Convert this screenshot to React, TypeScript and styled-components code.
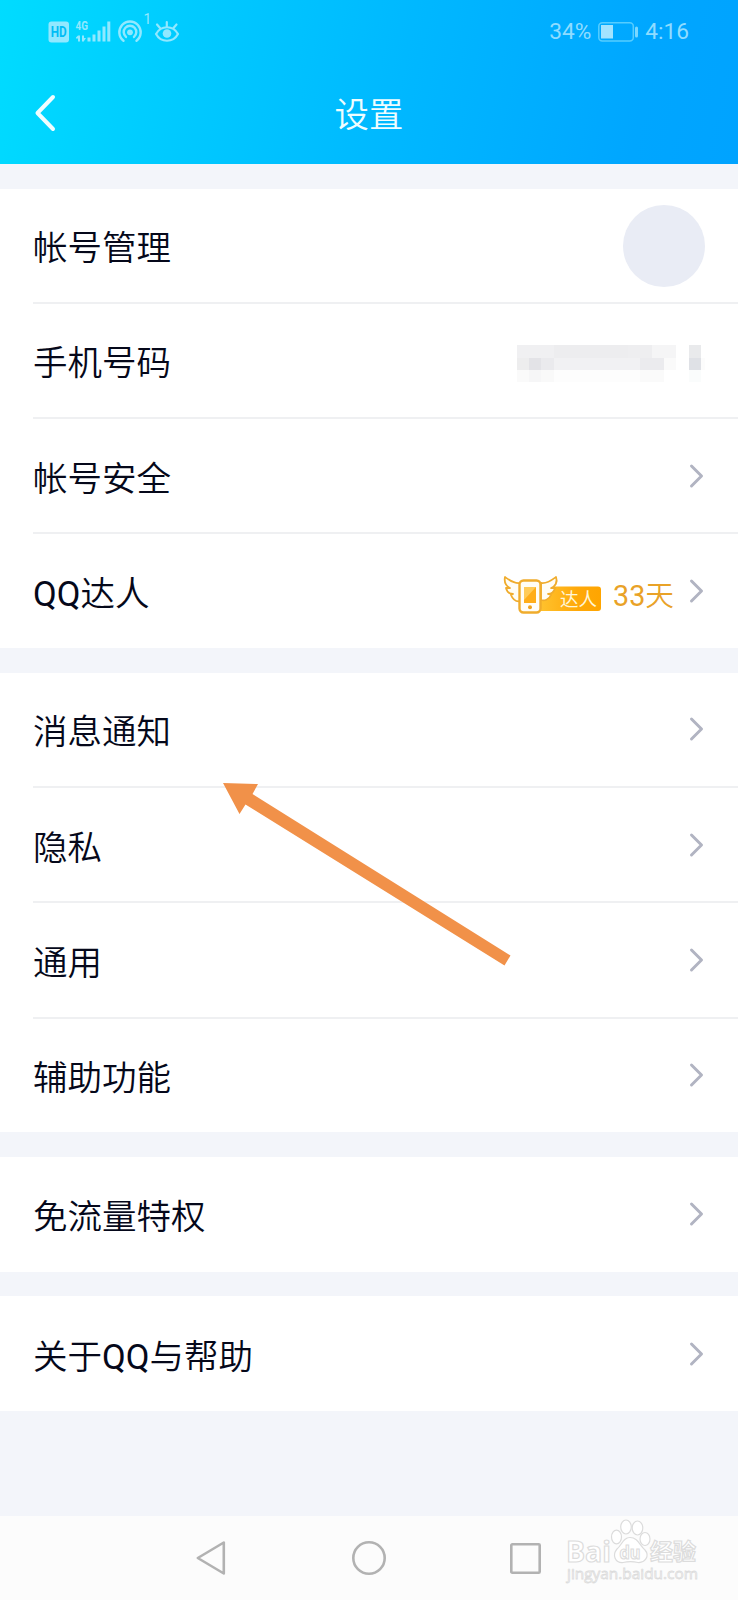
import React from 'react';
import styled, { createGlobalStyle } from 'styled-components';

const GlobalStyle = createGlobalStyle`
  * { box-sizing: border-box; }
  body {
    margin: 0;
    background: #f3f5fa;
    font-family: Roboto, 'Noto Sans CJK SC', sans-serif;
    color: #05081a;
  }
  svg { display: block; flex: none; }
`;

const Screen = styled.div`
  position: relative;
  display: flex;
  flex-direction: column;
  width: 738px;
  height: 1600px;
  overflow: hidden;
  background: #f3f5fa;
`;

const Header = styled.header`
  flex: none;
  height: 164px;
  background: linear-gradient(102deg, #00dcff 0%, #00caff 26%, #00b8ff 54%, #00a6ff 86%, #00a3ff 100%);
  color: #effdff;
`;

const StatusBar = styled.div`
  display: flex;
  justify-content: space-between;
  align-items: center;
  height: 63px;
  padding: 0 49px 0 48px;
  color: #91e8ff;
`;

const StatusGroup = styled.div<{ $gap: number }>`
  display: flex;
  align-items: center;
  gap: ${(p) => p.$gap}px;
`;

const StatusText = styled.span`
  font-size: 22.7px;
  line-height: 30px;
  color: #8fdcff;
`;

const TitleBar = styled.div`
  display: grid;
  grid-template-columns: 100px 1fr 100px;
  align-items: center;
  height: 101px;
`;

const BackButton = styled.button`
  justify-self: start;
  margin: 0 0 2px 34px;
  padding: 0;
  border: 0;
  background: none;
  color: inherit;
`;

const Title = styled.h1`
  margin: 3px 0 0;
  text-align: center;
  font-size: 34.4px;
  line-height: 50px;
  font-weight: 350;
`;

const List = styled.main`
  display: flex;
  flex-direction: column;
  flex: 1;
  gap: 24.5px;
  padding-top: 24.5px;
`;

const Group = styled.section`
  background: #fff;
  padding-left: 33px;
`;

const Row = styled.div`
  display: flex;
  align-items: center;
  justify-content: space-between;
  height: 114.9px;
  padding-right: 33px;
  &:not(:last-child) {
    height: 115.3px;
    border-bottom: 2px solid #eff0f2;
  }
  &:last-child:not(:first-child) { height: 113.8px; }
`;

const Label = styled.span`
  padding-top: 6px;
  font-size: 34.5px;
  line-height: 50px;
  font-weight: 350;
`;

const Latin = styled.span`
  font-weight: 400;
`;

const Value = styled.div`
  display: flex;
  align-items: center;
  padding-right: 1px;
`;

const Avatar = styled.div`
  width: 82px;
  height: 82px;
  margin-top: 2px;
  border-radius: 50%;
  background: #e9ecf5;
`;

const Mosaic = styled.svg`
  margin-top: 8px;
`;

const Badge = styled.svg`
  margin-top: 8px;
`;

const Days = styled.span`
  margin: 9px 15px 0 12px;
  font-size: 28.7px;
  line-height: 40px;
  font-weight: 350;
  color: #e9a227;
`;

const NavBar = styled.nav`
  display: flex;
  align-items: center;
  flex: none;
  height: 84px;
  padding-left: 196px;
  background: #fcfcfc;
`;

const NavItem = styled.div<{ $width: number }>`
  width: ${(p) => p.$width}px;
`;

const Overlay = styled.svg`
  position: absolute;
  left: 218px;
  top: 778px;
`;

const Watermark = styled.svg`
  position: absolute;
  left: 560px;
  top: 1514px;
`;

const Chevron = () => (
  <svg width="15" height="26" viewBox="0 0 15 26" fill="none" stroke="#b1b4c2" strokeWidth="3" strokeLinecap="round" strokeLinejoin="round">
    <path d="M2.5 3 12.5 13 2.5 23" />
  </svg>
);

const SignalIcons = () => (
  <svg width="134" height="34" viewBox="48 14.5 134 34" fill="currentColor" overflow="visible">
    <rect x="48.500" y="21" width="20.500" height="21" rx="3" />
    <text x="58.700" y="36.500" fontSize="14" fontWeight="700" textAnchor="middle" fill="#00bdf5" textLength="16" lengthAdjust="spacingAndGlyphs">HD</text>
    <text x="75.500" y="29.500" fontSize="12" fontWeight="700" textLength="12.500" lengthAdjust="spacingAndGlyphs">4G</text>
    <path d="M78 35h2v6h-2zM76 37l2-2v3h-2zM82 35h2v6h-2zM84 37.500h2l-2 3z" />
    <path d="M87.500 37h3v4h-3zM92.500 34h3v7h-3zM97.500 30h3v11h-3zM102.500 26h3v15h-3zM107.300 21h3v20h-3z" />
    <g fill="none" stroke="currentColor" strokeWidth="2.400" strokeLinecap="round">
      <path d="M123.500 40.200A10.700 10.700 0 1 1 136.500 40.200" />
      <path d="M126 36.400A6.300 6.300 0 1 1 134 36.400" />
    </g>
    <circle cx="130" cy="31.800" r="2.900" />
    <text x="143.500" y="23" fontSize="14">1</text>
    <g fill="none" stroke="currentColor" strokeWidth="2.200" strokeLinecap="round">
      <path d="M156 33.500C161 24.500 173 24.500 178 33.500C173 42.500 161 42.500 156 33.500Z" strokeLinejoin="round" />
      <path d="M157 24l3 3.500M166.800 21.500v4.500M176.500 24l-3 3.500" />
    </g>
    <circle cx="167" cy="33" r="4.300" />
  </svg>
);

const BatteryIcon = () => (
  <svg width="41" height="20" viewBox="0 0 41 20">
    <rect x=".800" y=".800" width="34.500" height="18.200" rx="3.500" fill="none" stroke="#56cdff" strokeWidth="1.500" />
    <rect x="3" y="3" width="12" height="13.500" fill="#a2e3ff" />
    <rect x="37" y="4.500" width="3" height="11" rx="1.500" fill="#7ad7ff" />
  </svg>
);

const MOSAIC: [number, number, number, number, string][] = [
  [0, 0, 37, 13, '#f0f0f2'],
  [37, 0, 74, 13, '#ededef'],
  [111, 0, 24, 13, '#eeeef0'],
  [135, 0, 24, 13, '#f5f5f6'],
  [0, 13, 12, 12, '#ededee'],
  [12, 13, 12, 12, '#e3e3e7'],
  [24, 13, 13, 12, '#eaeaed'],
  [37, 13, 86, 12, '#f1f1f3'],
  [123, 13, 24, 12, '#ebebee'],
  [147, 13, 12, 12, '#fafafa'],
  [0, 25, 12, 12, '#fafafa'],
  [12, 25, 12, 12, '#f6f6f7'],
  [24, 25, 13, 12, '#f9f9f9'],
  [37, 25, 86, 12, '#fdfdfd'],
  [123, 25, 24, 12, '#fafafa'],
  [172, 0, 12, 13, '#e9eaec'],
  [172, 13, 12, 12, '#dfe1e6'],
  [184, 13, 12, 12, '#fcfcfc'],
  [172, 25, 12, 12, '#fafcfc'],
];

const HiddenNumber = () => (
  <Mosaic width="188" height="38" viewBox="0 0 188 38" shapeRendering="crispEdges">
    {MOSAIC.map(([x, y, w, h, fill]) => (
      <rect key={`${x}-${y}`} x={x} y={y} width={w} height={h} fill={fill} />
    ))}
  </Mosaic>
);

const MasterBadge = () => (
  <Badge width="98" height="40" viewBox="503 575 98 40">
    <defs>
      <linearGradient id="badge" x1="0" x2="1">
        <stop offset="0" stopColor="#ffc22e" />
        <stop offset=".6" stopColor="#ffa90a" />
        <stop offset="1" stopColor="#ffa500" />
      </linearGradient>
    </defs>
    <path d="M540 590L555 586.500H598q3 0 3 3V608q0 3-3 3H540Z" fill="url(#badge)" />
    <text x="560" y="606" fontSize="18.500" fill="#fff6d8" textLength="37" lengthAdjust="spacingAndGlyphs">达人</text>
    <g fill="#fffdf6" stroke="#f0ac2c" strokeWidth="1.800" strokeLinejoin="round">
      <path d="M520 583C514 584 509 580 505 577C504 582 506 586 510 588C507 588 506 588 506 588C507 592 510 594 513 594C511 595 511 595 511 595C513 600 517 602 521 601Z" />
      <path d="M541 583C547 584 552 580 556 577C558 582 555 587 551 588L555 588C554 592 551 594 548 594L551 595C549 600 544 601 541 600Z" />
      <rect x="519.500" y="580.500" width="21" height="32" rx="4" strokeWidth="2.400" />
    </g>
    <path d="M524 587h12v16h-12z" fill="#ffad18" />
    <path d="M524 587h12l-12 13z" fill="#ffcb58" />
    <circle cx="530" cy="607.300" r="2" fill="#f0a31c" />
  </Badge>
);

interface Item {
  label: string;
  kind?: 'avatar' | 'phone' | 'master';
}

const GROUPS: Item[][] = [
  [
    { label: '帐号管理', kind: 'avatar' },
    { label: '手机号码', kind: 'phone' },
    { label: '帐号安全' },
    { label: 'QQ达人', kind: 'master' },
  ],
  [{ label: '消息通知' }, { label: '隐私' }, { label: '通用' }, { label: '辅助功能' }],
  [{ label: '免流量特权' }],
  [{ label: '关于QQ与帮助' }],
];

// Latin runs are set one weight heavier than the Chinese around them.
const MixedText = ({ text }: { text: string }) => (
  <>
    {text
      .split(/([A-Za-z0-9]+)/)
      .filter(Boolean)
      .map((part) => (/^[A-Za-z0-9]/.test(part) ? <Latin key={part}>{part}</Latin> : part))}
  </>
);

const ItemValue = ({ kind }: { kind?: Item['kind'] }) => {
  if (kind === 'avatar') return <Avatar />;
  if (kind === 'phone') return <HiddenNumber />;
  return (
    <Value>
      {kind === 'master' && (
        <>
          <MasterBadge />
          <Days>
            <MixedText text="33天" />
          </Days>
        </>
      )}
      <Chevron />
    </Value>
  );
};

export default function App() {
  return (
    <Screen>
      <GlobalStyle />
      <Header>
        <StatusBar>
          <StatusGroup $gap={0}>
            <SignalIcons />
          </StatusGroup>
          <StatusGroup $gap={6.5}>
            <StatusText>34%</StatusText>
            <BatteryIcon />
            <StatusText>4:16</StatusText>
          </StatusGroup>
        </StatusBar>
        <TitleBar>
          <BackButton aria-label="返回">
            <svg width="22" height="38" viewBox="0 0 22 38" fill="none" stroke="currentColor" strokeWidth="4" strokeLinecap="round" strokeLinejoin="round">
              <path d="M19 3 3.500 19 19 35" />
            </svg>
          </BackButton>
          <Title>设置</Title>
        </TitleBar>
      </Header>
      <List>
        {GROUPS.map((group) => (
          <Group key={group[0].label}>
            {group.map((item) => (
              <Row key={item.label}>
                <Label>
                  <MixedText text={item.label} />
                </Label>
                <ItemValue kind={item.kind} />
              </Row>
            ))}
          </Group>
        ))}
      </List>
      <NavBar>
        <NavItem $width={156}>
          <svg width="31" height="36" viewBox="0 0 31 36" fill="none" stroke="#b2b2b2" strokeWidth="2.600" strokeLinejoin="round">
            <path d="M27.800 2.500V33.500L1.800 18Z" />
          </svg>
        </NavItem>
        <NavItem $width={158}>
          <svg width="34" height="34" viewBox="0 0 34 34" fill="none" stroke="#b2b2b2" strokeWidth="2.600">
            <circle cx="17" cy="17" r="15.700" />
          </svg>
        </NavItem>
        <NavItem $width={32}>
          <svg width="31" height="31" viewBox="0 0 31 31" fill="none" stroke="#b2b2b2" strokeWidth="2.600">
            <rect x="1.300" y="1.300" width="28.400" height="28.400" rx="1" />
          </svg>
        </NavItem>
      </NavBar>
      <Overlay width="300" height="194" viewBox="218 778 300 194">
        <path d="M223 783L258 784L252.500 794L510.500 955.500L504.500 965.500L245.500 804.500L239.500 814Z" fill="#f19149" />
      </Overlay>
      <Watermark width="150" height="74" viewBox="560 1514 150 74" fill="#fff" stroke="#dcdcdc" strokeWidth="1.200" fontFamily="'Open Sans', 'Noto Sans CJK SC', sans-serif">
        <text x="566" y="1561.500" fontSize="29" fontWeight="700" textLength="45" lengthAdjust="spacingAndGlyphs">Bai</text>
        <ellipse cx="616.500" cy="1537" rx="5" ry="6.800" />
        <ellipse cx="626" cy="1527" rx="5.300" ry="7" />
        <ellipse cx="637.500" cy="1528" rx="5.300" ry="7" />
        <ellipse cx="645" cy="1539" rx="5" ry="6.500" />
        <path d="M630 1537.500C638 1537.500 640 1546 645 1550C650 1556 645 1563 638 1562.500C632 1561 629 1561 623 1562.500C615 1563 612 1555 617 1549C622 1545 623 1537.500 630 1537.500Z" />
        <text x="619.500" y="1559" fontSize="18" fontWeight="700" textLength="21" lengthAdjust="spacingAndGlyphs">du</text>
        <text x="650" y="1560" fontSize="23" fontWeight="700" textLength="46" lengthAdjust="spacingAndGlyphs">经验</text>
        <text x="567" y="1579" fontSize="15" strokeWidth=".800" textLength="131" lengthAdjust="spacingAndGlyphs">jingyan.baidu.com</text>
      </Watermark>
    </Screen>
  );
}
